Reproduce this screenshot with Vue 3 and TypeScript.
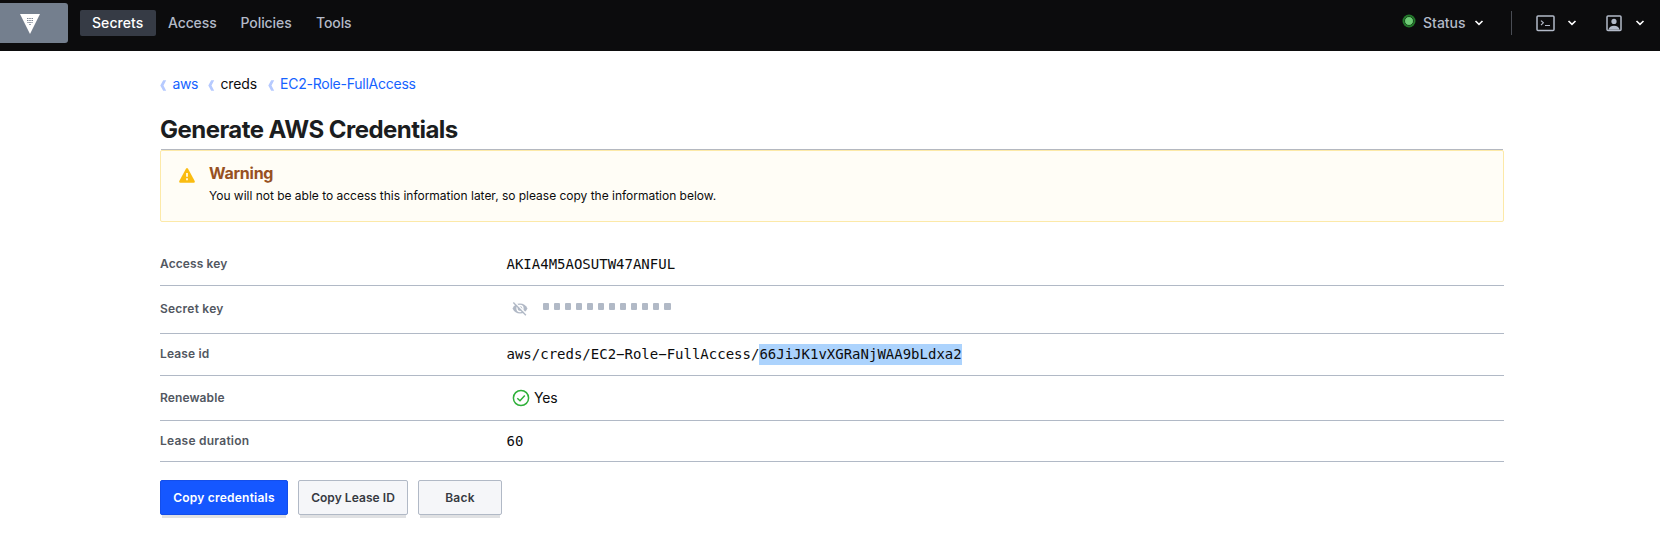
<script setup lang="ts">
interface Tab { label: string; cls: string; active?: boolean }

const tabs: Tab[] = [
  { label: 'Secrets', cls: 'secrets', active: true },
  { label: 'Access', cls: 'access' },
  { label: 'Policies', cls: 'policies' },
  { label: 'Tools', cls: 'tools' },
]

const crumbs = [
  { label: 'aws', cls: 'c-aws', link: true },
  { label: 'creds', cls: 'c-creds', link: false },
  { label: 'EC2-Role-FullAccess', cls: 'c-role', link: true },
]

const maskDots = 12
</script>

<template>
  <div class="page">
    <header class="nav">
      <a class="logo">
        <svg width="20" height="20" viewBox="0 0 20 20">
          <path d="M0 0H20L10 20Z" fill="#fff" />
          <path d="M7 4.500h1.500M9.200 4.500h1.600M11.500 4.500h1.500M7 6.500h1.500M9.200 6.500h1.600M11.500 6.500h1.500M7.400 8.500h1.300M9.200 8.500h1.600M11.400 8.500h1.200M9.200 10.500h1.600" stroke="#7f8896" stroke-width="1" />
        </svg>
      </a>
      <nav class="tabs">
        <a v-for="t in tabs" :key="t.label" class="tab" :class="[t.cls, { active: t.active }]">{{ t.label }}</a>
      </nav>
      <div class="tools-right">
        <span class="dot"></span>
        <span class="status">Status</span>
        <svg class="chev chev-a" width="10" height="6" viewBox="0 0 10 6"><path d="M1.5 1L5 4.4L8.5 1" /></svg>
        <span class="divider"></span>
        <svg class="console" width="19" height="17" viewBox="0 0 19 17" fill="none" stroke="#b3bac8">
          <rect x="1" y="1" width="17" height="14.6" rx="1" stroke-width="1.5" />
          <path d="M5 5.6l2.4 2.2L5 10M9 10.5h5" stroke-width="1.1" />
        </svg>
        <svg class="chev chev-b" width="10" height="6" viewBox="0 0 10 6"><path d="M1.5 1L5 4.4L8.5 1" /></svg>
        <svg class="user" width="16" height="17" viewBox="0 0 16 17">
          <rect x="1" y="1" width="14" height="14.6" rx="1" fill="none" stroke="#b3bac8" stroke-width="1.5" />
          <circle cx="8" cy="6.4" r="2.6" fill="#b3bac8" />
          <path d="M2.4 14.8C3 11.8 5 10.7 8 10.7s5 1.100 5.600 4.100z" fill="#b3bac8" />
        </svg>
        <svg class="chev chev-c" width="10" height="6" viewBox="0 0 10 6"><path d="M1.5 1L5 4.4L8.5 1" /></svg>
      </div>
    </header>

    <main class="content">
      <nav class="crumbs">
        <a v-for="c in crumbs" :key="c.label" class="crumb" :class="[c.cls, { link: c.link }]">
          <svg width="7" height="11" viewBox="0 0 7 11"><path d="M3.200 0.300H6.200L3.500 5.500L6.200 10.700H3.200L0.300 5.500Z" fill="#b6caff" /></svg>
          <span>{{ c.label }}</span>
        </a>
      </nav>

      <h1 class="title">Generate AWS Credentials</h1>
      <div class="rule"></div>

      <section class="alert">
        <svg class="alert-icon" width="16" height="15" viewBox="0 0 16 15">
          <path d="M7.100 0.600Q8 -0.500 8.900 0.600L15.700 13Q16.200 14.600 14.800 14.700H1.200Q-0.200 14.600 0.300 13Z" fill="#fabc11" />
          <path d="M8 5V8.700M8 10.200V12.200" stroke="#fffdf6" stroke-width="1.700" />
        </svg>
        <div class="alert-body">
          <div class="alert-title">Warning</div>
          <div class="alert-text">You will not be able to access this information later, so please copy the information below.</div>
        </div>
      </section>

      <section class="rows">
        <div class="row r1">
          <div class="label l1">Access key</div>
          <div class="value mono">AKIA4M5AOSUTW47ANFUL</div>
        </div>
        <div class="row r2">
          <div class="label l2">Secret key</div>
          <div class="value masked">
            <svg class="eye" width="16" height="14" viewBox="0 0 16 14">
              <path d="M0.500 6.500Q3 1.400 8 1.400T15.500 6.500Q13 11.600 8 11.600T0.500 6.500Z" fill="#b1b9c6" />
              <circle cx="8" cy="6.500" r="3" fill="none" stroke="#fff" stroke-width="1.300" />
              <path d="M2.200 -0.300L14.800 12.300" stroke="#fff" stroke-width="1.500" />
              <path d="M1.300 0.600L13.900 13.300" stroke="#b1b9c6" stroke-width="1.400" />
            </svg>
            <div class="mask"><i v-for="n in maskDots" :key="n"></i></div>
          </div>
        </div>
        <div class="row r3">
          <div class="label l3">Lease id</div>
          <div class="value mono">aws/creds/EC2−Role−FullAccess/<span class="selected">66JiJK1vXGRaNjWAA9bLdxa2</span></div>
        </div>
        <div class="row r4">
          <div class="label l4">Renewable</div>
          <div class="value renew">
            <svg width="18" height="18" viewBox="0 0 18 18" fill="none" stroke="#2eb039">
              <circle cx="9" cy="9" r="7.600" stroke-width="1.500" />
              <path d="M5.300 9.200L8 11.700L12.800 6.500" stroke-width="1.500" />
            </svg>
            <span class="yes">Yes</span>
          </div>
        </div>
        <div class="row r5">
          <div class="label l5">Lease duration</div>
          <div class="value mono">60</div>
        </div>
      </section>

      <div class="actions">
        <button class="btn primary"><span class="b1">Copy credentials</span></button>
        <button class="btn lease"><span class="b2">Copy Lease ID</span></button>
        <button class="btn back"><span class="b3">Back</span></button>
      </div>
    </main>
  </div>
</template>

<style>
body { background: #fff; overflow: hidden; }
</style>

<style scoped>
.page { height: 542px; font-family: Inter, "Liberation Sans", sans-serif; color: #0c0c0d; background: #fff; white-space: nowrap; }
.nav { height: 51px; background: #0c0c0d; display: flex; align-items: flex-start; }
.logo { margin-top: 3px; width: 68px; height: 40px; box-sizing: border-box; background: #747f8e; border-radius: 0 3px 3px 0; padding: 11px 0 0 20px; }
.logo svg { display: block; }
.tabs { display: flex; margin: 10px 0 0 12px; }
.tab { height: 26px; line-height: 26px; box-sizing: border-box; padding-left: 12px; font-size: 14px; font-weight: 500; color: #b3bac8; border-radius: 2px; }
.tab.active { background: #363b45; color: #fff; }
.secrets { width: 76px; letter-spacing: 0.06px; }
.access { width: 72.500px; letter-spacing: -0.12px; }
.policies { width: 75.500px; letter-spacing: -0.08px; }
.tools { width: 60px; letter-spacing: -0.1px; }
.tools-right { margin-left: auto; height: 46px; width: 258px; display: flex; align-items: center; }
.dot { width: 8px; height: 8px; border-radius: 50%; background: #6ecb75; border: 1.500px solid #154a1b; box-shadow: 0 0 0 1.500px #237a2b; margin: -4px 0 0 2px; flex: none; }
.status { margin-left: 9px; width: 43px; font-size: 14px; font-weight: 500; line-height: 20px; margin-top: -1px; color: #b3bac8; letter-spacing: 0; }
.chev { fill: none; stroke: #fff; stroke-width: 1.600; flex: none; }
.chev-a { margin-left: 8px; }
.divider { width: 1px; height: 24px; background: #4a4d54; margin-left: 27px; }
.console { margin-left: 24px; flex: none; }
.chev-b { margin-left: 12px; }
.user { margin-left: 29px; flex: none; }
.chev-c { margin-left: 13px; }

.content { width: 1344px; margin-left: 160px; }
.crumbs { display: flex; height: 20px; margin-top: 23px; }
.crumb { display: flex; align-items: center; font-size: 14px; line-height: 20px; }
.crumb svg { margin-top: 2px; margin-right: 5.500px; flex: none; }
.link { color: #1563ff; }
.c-aws { width: 48px; letter-spacing: -0.4px; }
.c-creds { width: 59.500px; letter-spacing: -0.15px; }
.c-role { letter-spacing: -0.24px; }
.title { margin: 20px 0 0; height: 35px; line-height: 32px; font-size: 24px; font-weight: 700; letter-spacing: -0.540px; color: #1b1d20; }
.rule { height: 1px; background: #b4b8c0; margin: 0 1px; }
.alert { box-sizing: border-box; height: 72px; border: 1px solid #fce9a8; border-radius: 2px; background: #fffdf6; display: flex; padding: 12px 0 0 18px; }
.alert-icon { margin-top: 5px; flex: none; }
.alert-body { margin-left: 14px; }
.alert-title { font-size: 16px; line-height: 20px; font-weight: 700; color: #975122; letter-spacing: -0.250px; }
.alert-text { font-size: 12px; line-height: 18px; margin-top: 4px; letter-spacing: -0.015px; }

.rows { margin-top: 20px; }
.row { display: flex; align-items: center; box-sizing: border-box; border-bottom: 1px solid #b1b9c6; }
.r1 { height: 44px; } .r2 { height: 48px; } .r3 { height: 42px; } .r4 { height: 45px; } .r5 { height: 41px; }
.r1 .mono { padding-top: 1px; }
.label { width: 346.500px; font-size: 12px; font-weight: 600; line-height: 18px; color: #525761; }
.l1 { letter-spacing: 0.1px; }
.l2 { letter-spacing: 0.23px; padding-bottom: 2px; }
.l3 { letter-spacing: 0.15px; padding-bottom: 1px; }
.l4 { letter-spacing: 0.1px; }
.l5 { letter-spacing: 0.24px; }
.value { display: flex; align-items: center; }
.mono { font-family: "DejaVu Sans Mono", monospace; font-size: 14px; line-height: 21px; }
.selected { background: #acd3fd; height: 21px; }
.masked { padding: 0 0 2px 5px; }
.mask { display: flex; gap: 4.550px; margin: -4px 0 0 15px; }
.mask i { width: 6.500px; height: 6.500px; background: #b1b9c6; border-radius: 1px; }
.renew { padding: 0 0 2px 5.500px; }
.renew svg { margin-top: 2px; }
.yes { font-size: 14px; margin-left: 4px; letter-spacing: -0.2px; }

.actions { display: flex; gap: 10px; margin-top: 18px; }
.btn { height: 35px; box-sizing: border-box; padding: 0; border: 1px solid #b1b9c6; border-radius: 2px; background: #f5f6f9; color: #373a42; font-family: inherit; font-size: 12px; font-weight: 600; box-shadow: 0 5px 0 -2px #e0e1e3; }
.primary { width: 128px; background: #1557ff; border-color: #144eea; color: #fff; }
.b1 { letter-spacing: 0.22px; }
.b2 { letter-spacing: 0.05px; }
.b3 { letter-spacing: 0.25px; }
.lease { width: 110px; }
.back { width: 84px; }
</style>
